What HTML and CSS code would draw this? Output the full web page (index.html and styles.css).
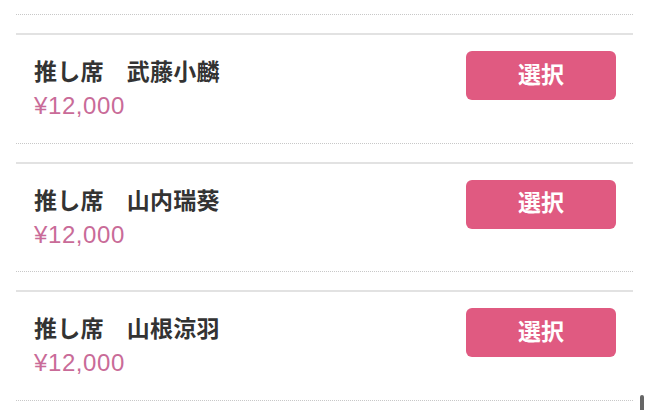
FILE: index.html
```html
<!DOCTYPE html>
<html lang="ja">
<head>
<meta charset="utf-8">
<link rel="stylesheet" href="styles.css">
</head>
<body>
<div class="list">
  <div class="list-head"></div>
  <div class="item">
    <div class="info">
      <div class="title">推し席　武藤小麟</div>
      <div class="price">¥12,000</div>
    </div>
    <button class="select">選択</button>
  </div>
  <div class="item">
    <div class="info">
      <div class="title">推し席　山内瑞葵</div>
      <div class="price">¥12,000</div>
    </div>
    <button class="select">選択</button>
  </div>
  <div class="item">
    <div class="info">
      <div class="title">推し席　山根涼羽</div>
      <div class="price">¥12,000</div>
    </div>
    <button class="select">選択</button>
  </div>
</div>
<div class="scroll-thumb"></div>
</body>
</html>
```
FILE: styles.css
```css
html, body {
  margin: 0;
  padding: 0;
  background: #fff;
  overflow: hidden;
  height: 410px;
}
body {
  font-family: "Noto Sans CJK JP", "Noto Sans", sans-serif;
  position: relative;
}
.list {
  padding: 0 17px 0 16px;
}
.list-head {
  height: 14px;
  border-bottom: 1px dotted #c8c8c8;
}
.item {
  margin-top: 18px;
  border-top: 2px solid #e2e2e2;
  border-bottom: 1px dotted #c8c8c8;
  padding: 16px 17px 0 18px;
  height: 91.5px;
  display: flex;
  justify-content: space-between;
  align-items: flex-start;
}
.info {
  display: flex;
  flex-direction: column;
  padding-top: 4px;
}
.title {
  font-size: 23px;
  font-weight: bold;
  color: #333;
  line-height: 30px;
  letter-spacing: 0.2px;
}
.price {
  font-family: "Liberation Sans", Arial, sans-serif;
  font-size: 24px;
  color: #c96b98;
  line-height: 30px;
  margin-top: 6px;
  letter-spacing: 0.6px;
}
.select {
  width: 150px;
  height: 49px;
  border: none;
  border-radius: 6px;
  background: #e05a81;
  color: #fff;
  font-family: "Noto Sans CJK JP", sans-serif;
  font-size: 23px;
  font-weight: bold;
  line-height: 1;
  padding: 0 0 5px 0;
}
.scroll-thumb {
  position: absolute;
  left: 640px;
  top: 395px;
  width: 4px;
  height: 20px;
  border-radius: 2px;
  background: #666;
}
```
